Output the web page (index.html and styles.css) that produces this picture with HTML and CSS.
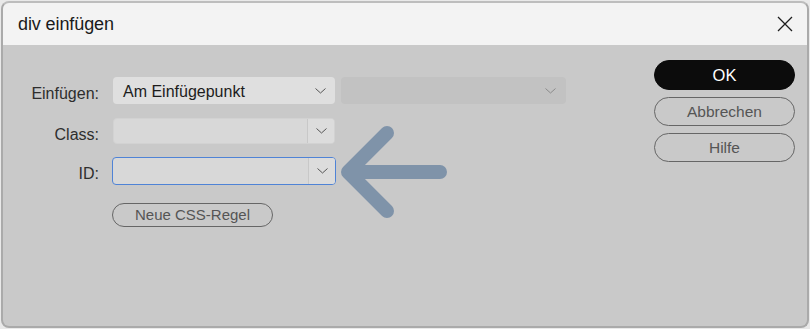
FILE: index.html
```html
<!DOCTYPE html>
<html lang="de">
<head>
<meta charset="utf-8">
<title>div einfügen</title>
<link rel="stylesheet" href="styles.css">
</head>
<body>
<div class="window">
  <header class="titlebar">
    <span class="title">div einfügen</span>
    <svg class="close" width="16" height="16" viewBox="0 0 16 16"><path d="M1 1 L15 15 M15 1 L1 15" stroke="#1e1e1e" stroke-width="1.3" fill="none"/></svg>
  </header>
  <main class="content">
    <div class="form">
      <label class="label">Einfügen:</label>
      <div class="select">
        <span class="value">Am Einfügepunkt</span>
        <svg class="chev" width="11" height="6" viewBox="0 0 11 6"><path d="M0.5 0.5 L5.5 5 L10.5 0.5" stroke="#555" stroke-width="1" fill="none"/></svg>
      </div>
      <div class="select disabled">
        <span class="value"></span>
        <svg class="chev" width="11" height="6" viewBox="0 0 11 6"><path d="M0.5 0.5 L5.5 5 L10.5 0.5" stroke="#8a8a8a" stroke-width="1" fill="none"/></svg>
      </div>

      <label class="label">Class:</label>
      <div class="combo">
        <span class="field"></span>
        <span class="dropbtn"><svg width="11" height="6" viewBox="0 0 11 6"><path d="M0.5 0.5 L5.5 5 L10.5 0.5" stroke="#555" stroke-width="1" fill="none"/></svg></span>
      </div>
      <span></span>

      <label class="label">ID:</label>
      <div class="combo focus">
        <span class="field"></span>
        <span class="dropbtn"><svg width="11" height="6" viewBox="0 0 11 6"><path d="M0.5 0.5 L5.5 5 L10.5 0.5" stroke="#555" stroke-width="1" fill="none"/></svg></span>
      </div>
      <span></span>

      <span></span>
      <div class="btnrow"><button class="pill css">Neue CSS-Regel</button></div>
      <span></span>
    </div>
    <div class="buttons">
      <button class="pill ok">OK</button>
      <button class="pill">Abbrechen</button>
      <button class="pill">Hilfe</button>
    </div>
  </main>
  <svg class="arrow" width="120" height="100" viewBox="0 0 120 100"><path d="M48 9 L9 48 L48 87 M9 48 L101 48" stroke="#7f93a9" stroke-width="14" stroke-linecap="round" stroke-linejoin="round" fill="none"/></svg>
</div>
</body>
</html>
```
FILE: styles.css
```css
html, body {
  margin: 0;
  padding: 0;
  background: #e9e9e9;
}
body {
  width: 810px;
  height: 329px;
  font-family: "Liberation Sans", Arial, sans-serif;
}
.window {
  position: relative;
  box-sizing: border-box;
  margin: 1px 1px 0 1px;
  width: 808px;
  height: 327px;
  border: 2px solid #aaaaaa;
  border-top-color: #bdbdbd;
  border-radius: 8px;
  background: #c9c9c9;
  overflow: hidden;
  display: flex;
  flex-direction: column;
}
.titlebar {
  height: 42px;
  background: #f3f3f3;
  display: flex;
  align-items: center;
  justify-content: space-between;
  padding: 0 14px 0 15px;
  flex-shrink: 0;
}
.title {
  font-size: 18px;
  color: #1a1a1a;
  letter-spacing: -0.1px;
  margin-top: 1px;
}
.close {
  display: block;
}
.content {
  flex: 1;
  display: flex;
  align-items: flex-start;
  padding: 15px 12px 0 0;
}
.form {
  margin-top: 17px;
  display: grid;
  grid-template-columns: 96px 222px 225px;
  grid-template-rows: 27px 26px 28px 24px;
  column-gap: 14px;
  row-gap: 13.5px;
}
.label {
  text-align: right;
  font-size: 16px;
  color: #2e2e2e;
  line-height: 27px;
  padding-top: 3px;
  box-sizing: border-box;
}
.select {
  box-sizing: border-box;
  height: 27px;
  background: #dfdfdf;
  border-radius: 4px;
  display: flex;
  align-items: center;
  justify-content: space-between;
  padding: 0 9px 0 10px;
}
.select.disabled {
  width: 225px;
  justify-self: start;
  margin-left: -8px;
  background: #c2c2c2;
  padding-right: 10px;
}
.value {
  font-size: 16px;
  color: #1c1c1c;
  padding-top: 2px;
}
.chev { display: block; }
.combo {
  box-sizing: border-box;
  height: 26px;
  display: flex;
  background: #d8d8d8;
  border: 1px solid #d2d2d2;
  border-radius: 4px;
  overflow: hidden;
}
.combo .field { flex: 1; }
.combo .dropbtn {
  width: 26px;
  border-left: 1px solid #c8c8c8;
  background: #dcdcdc;
  display: flex;
  align-items: center;
  justify-content: center;
}
.combo.focus {
  height: 28px;
  width: 224px;
  margin-left: -1px;
  border: 1.5px solid #4f83d6;
}
.btnrow {
  margin-top: 4px;
  margin-left: -1px;
}
.pill {
  box-sizing: border-box;
  font-family: "Liberation Sans", Arial, sans-serif;
  background: transparent;
  border: 1px solid #666;
  color: #555;
  border-radius: 16px;
  padding: 0;
  display: flex;
  align-items: center;
  justify-content: center;
}
.css {
  width: 161px;
  height: 24px;
  font-size: 15px;
  border-radius: 12px;
}
.buttons {
  margin-left: auto;
  display: flex;
  flex-direction: column;
  gap: 7px;
}
.buttons .pill {
  width: 141px;
  height: 29px;
  font-size: 15.5px;
}
.buttons .ok {
  height: 30px;
  background: #0c0c0c;
  border-color: #0c0c0c;
  color: #ffffff;
  font-size: 16.5px;
}
.arrow {
  position: absolute;
  left: 336px;
  top: 121px;
}
```
